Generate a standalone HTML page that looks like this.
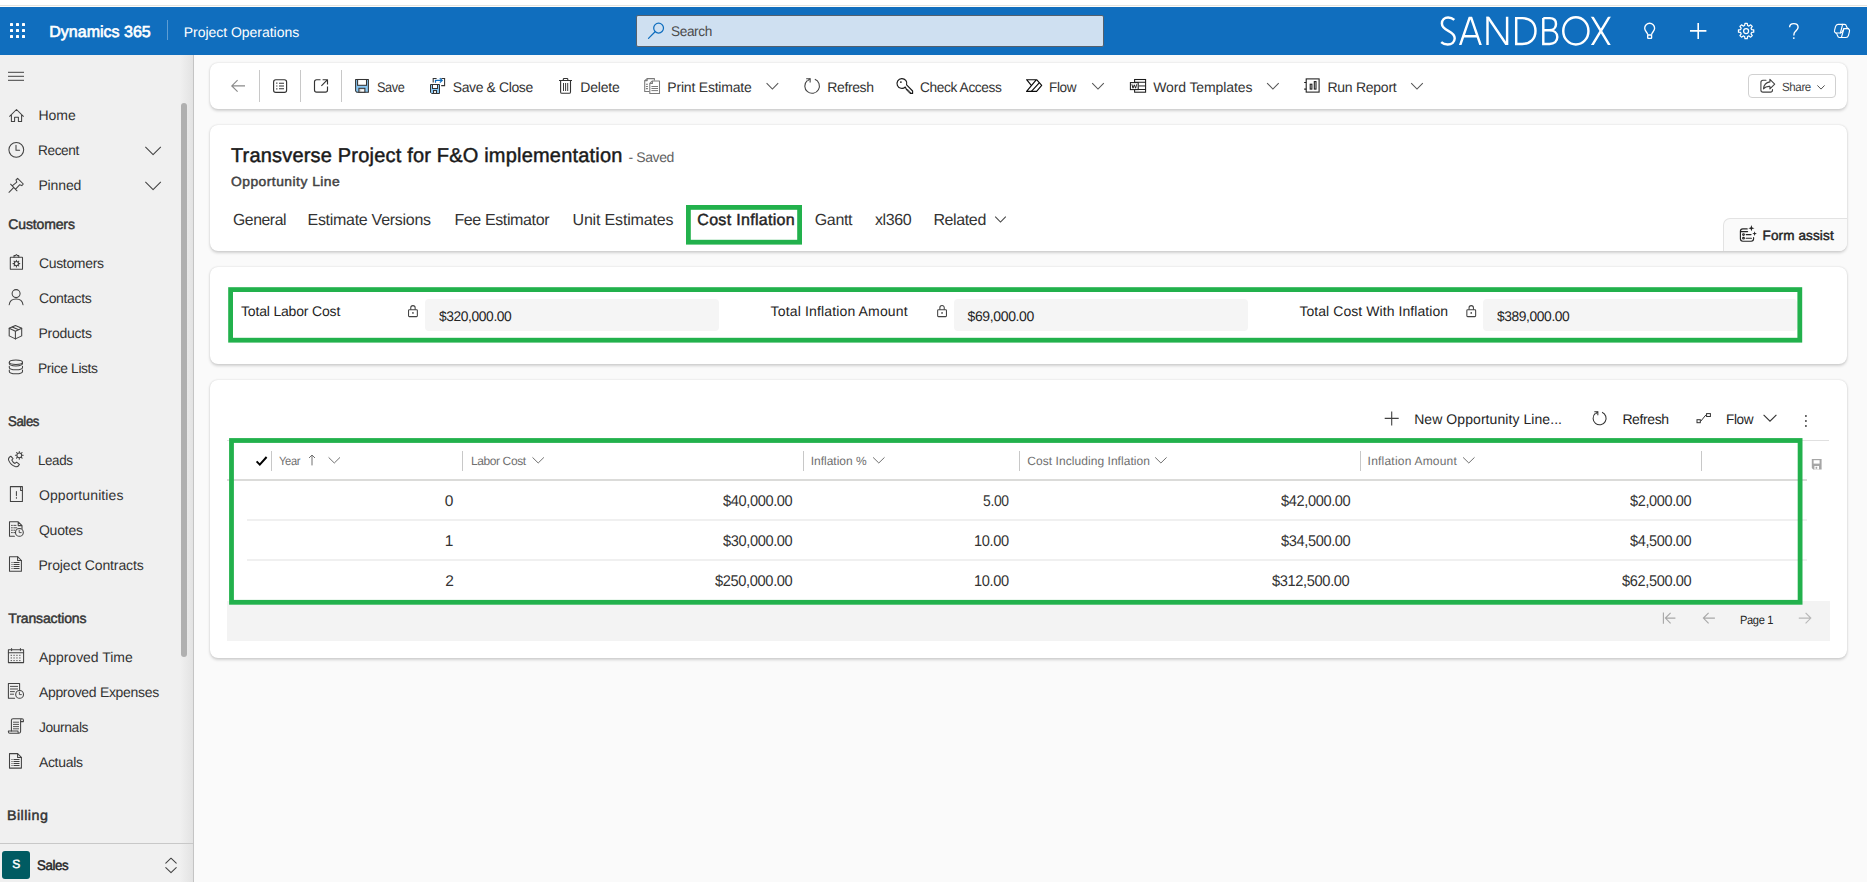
<!DOCTYPE html>
<html lang="en">
<head>
<meta charset="utf-8">
<title>Opportunity Line: Transverse Project for F&amp;O implementation - Dynamics 365</title>
<style>
*{box-sizing:border-box;margin:0;padding:0}
html,body{width:1867px;height:882px;overflow:hidden;background:#fafafa;font-family:"Liberation Sans",sans-serif}
.a{position:absolute}
.t{position:absolute;white-space:pre;display:block;transform-origin:0 0;text-rendering:geometricPrecision}
#topstrip{left:0;top:0;width:1867px;height:7px;border-top:5px solid #fff;border-bottom:1px solid #fffdf9;background:#e3e3df}
#hdr{left:0;top:7px;width:1867px;height:48px;background:#106ebe}
#search{left:636px;top:15px;width:468px;height:32px;background:#cfe0f1;border:1px solid #54606d;border-radius:2px}
#side{left:0;top:55px;width:194px;height:827px;background:#f0f0f0;border-right:1px solid #c4c4c4}
#sideshade{left:180px;top:55px;width:13px;height:827px;background:linear-gradient(90deg,rgba(0,0,0,0),rgba(0,0,0,.055))}
#scroll{left:181px;top:103px;width:6px;height:554px;background:#b0b0b0;border-radius:3px}
#sidefoot{left:0;top:843px;width:193px;height:1px;background:#c8c8c8}
#app{left:2px;top:851px;width:28px;height:28px;background:#005b62;border-radius:3px}
.card{position:absolute;left:210px;width:1637px;background:#fff;border-radius:8px;box-shadow:0 1.2px 3px rgba(0,0,0,.16),0 0 2px rgba(0,0,0,.10)}
#c1{top:63px;height:46px}
#c2{top:125px;height:126px}
#c3{top:267px;height:97px}
#c4{top:380px;height:278px}
.vs{position:absolute;width:1px;background:#c8c8c8}
#share{left:1748px;top:74px;width:88px;height:24px;border:1px solid #d1d1d1;border-radius:4px;background:#fff}
#fa{left:1723px;top:218px;width:124px;height:33px;background:#fafafa;border-top:1px solid #e3e3e3;border-left:1px solid #e3e3e3;border-radius:7px 0 8px 0}
.inp{position:absolute;top:299px;height:32px;background:#f5f5f5;border-radius:4px}
.gb{position:absolute;border:4.8px solid #22b14c}
#gfoot{left:227px;top:601px;width:1603px;height:40px;background:#f3f3f3}
.hl{position:absolute;height:2px;background:#f0f0f0}
</style>
</head>
<body>
<div class="a" id="topstrip"></div>
<div class="a" id="hdr"></div>
<div class="a" id="search"></div>
<div class="a" id="side"></div>
<div class="a" id="sideshade"></div>
<div class="a" id="scroll"></div>
<div class="a" id="sidefoot"></div>
<div class="a" id="app"></div>

<div class="card" id="c1"></div>
<div class="vs" style="left:259px;top:70px;height:32px"></div>
<div class="vs" style="left:300px;top:70px;height:32px"></div>
<div class="vs" style="left:341px;top:70px;height:32px"></div>
<div class="a" id="share"></div>

<div class="card" id="c2"></div>
<div class="a" id="fa"></div>

<div class="card" id="c3"></div>
<div class="inp" style="left:425px;width:294px"></div>
<div class="inp" style="left:954px;width:294px"></div>
<div class="inp" style="left:1483px;width:314px"></div>

<div class="card" id="c4"></div>
<div class="a" style="left:227px;top:440px;width:1602px;height:1px;background:#e0e0e0"></div>
<div class="a" id="gfoot"></div>
<div class="a" style="left:227px;top:479px;width:1580px;height:2px;background:#dbdbd9"></div>
<div class="hl" style="left:247px;top:519px;width:1560px"></div>
<div class="hl" style="left:247px;top:559px;width:1560px"></div>
<div class="vs" style="left:271px;top:451px;height:20px"></div>
<div class="vs" style="left:462px;top:451px;height:20px"></div>
<div class="vs" style="left:803px;top:451px;height:20px"></div>
<div class="vs" style="left:1019px;top:451px;height:20px"></div>
<div class="vs" style="left:1360px;top:451px;height:20px"></div>
<div class="vs" style="left:1701px;top:451px;height:20px"></div>

<span class="t" style="left:49.30px;top:25.00px;font-size:16px;line-height:16px;font-weight:400;color:#ffffff;letter-spacing:0.002px;-webkit-text-stroke:0.64px #ffffff;">Dynamics 365</span>
<span class="t" style="left:183.80px;top:25.00px;font-size:14px;line-height:14px;font-weight:400;color:#ffffff;letter-spacing:-0.032px;">Project Operations</span>
<span class="t" style="left:671.20px;top:24.00px;font-size:14px;line-height:14px;font-weight:400;color:#4a4a4a;letter-spacing:-0.400px;transform:scaleX(0.9742);">Search</span>
<span class="t" style="left:38.40px;top:108.00px;font-size:14px;line-height:14px;font-weight:400;color:#333333;letter-spacing:-0.020px;">Home</span>
<span class="t" style="left:38.43px;top:143.00px;font-size:14px;line-height:14px;font-weight:400;color:#333333;letter-spacing:-0.400px;transform:scaleX(0.9742);">Recent</span>
<span class="t" style="left:38.40px;top:178.00px;font-size:14px;line-height:14px;font-weight:400;color:#333333;letter-spacing:-0.121px;">Pinned</span>
<span class="t" style="left:8.30px;top:217.00px;font-size:14px;line-height:14px;font-weight:400;color:#333333;letter-spacing:-0.135px;-webkit-text-stroke:0.46px #333333;">Customers</span>
<span class="t" style="left:38.90px;top:256.00px;font-size:14px;line-height:14px;font-weight:400;color:#333333;letter-spacing:-0.323px;">Customers</span>
<span class="t" style="left:38.90px;top:291.00px;font-size:14px;line-height:14px;font-weight:400;color:#333333;letter-spacing:-0.350px;">Contacts</span>
<span class="t" style="left:38.40px;top:326.00px;font-size:14px;line-height:14px;font-weight:400;color:#333333;letter-spacing:-0.235px;">Products</span>
<span class="t" style="left:38.41px;top:361.00px;font-size:14px;line-height:14px;font-weight:400;color:#333333;letter-spacing:-0.400px;transform:scaleX(0.9904);">Price Lists</span>
<span class="t" style="left:8.30px;top:414.00px;font-size:14px;line-height:14px;font-weight:400;color:#333333;letter-spacing:-0.400px;transform:scaleX(0.9395);-webkit-text-stroke:0.46px #333333;">Sales</span>
<span class="t" style="left:38.45px;top:453.00px;font-size:14px;line-height:14px;font-weight:400;color:#333333;letter-spacing:-0.400px;transform:scaleX(0.9537);">Leads</span>
<span class="t" style="left:38.90px;top:488.00px;font-size:14px;line-height:14px;font-weight:400;color:#333333;letter-spacing:0.111px;">Opportunities</span>
<span class="t" style="left:38.90px;top:523.00px;font-size:14px;line-height:14px;font-weight:400;color:#333333;letter-spacing:-0.208px;">Quotes</span>
<span class="t" style="left:38.40px;top:558.00px;font-size:14px;line-height:14px;font-weight:400;color:#333333;letter-spacing:-0.130px;">Project Contracts</span>
<span class="t" style="left:8.30px;top:611.00px;font-size:14px;line-height:14px;font-weight:400;color:#333333;letter-spacing:-0.130px;-webkit-text-stroke:0.46px #333333;">Transactions</span>
<span class="t" style="left:38.90px;top:650.00px;font-size:14px;line-height:14px;font-weight:400;color:#333333;letter-spacing:-0.023px;">Approved Time</span>
<span class="t" style="left:38.90px;top:685.00px;font-size:14px;line-height:14px;font-weight:400;color:#333333;letter-spacing:-0.313px;">Approved Expenses</span>
<span class="t" style="left:38.90px;top:720.00px;font-size:14px;line-height:14px;font-weight:400;color:#333333;letter-spacing:-0.400px;transform:scaleX(0.9877);">Journals</span>
<span class="t" style="left:38.90px;top:755.00px;font-size:14px;line-height:14px;font-weight:400;color:#333333;letter-spacing:-0.302px;">Actuals</span>
<span class="t" style="left:7.28px;top:808.00px;font-size:14px;line-height:14px;font-weight:400;color:#333333;letter-spacing:0.450px;transform:scaleX(1.0192);-webkit-text-stroke:0.46px #333333;">Billing</span>
<span class="t" style="left:12.25px;top:858.00px;font-size:12px;line-height:12px;font-weight:400;color:#ffffff;letter-spacing:0.000px;-webkit-text-stroke:0.46px #ffffff;">S</span>
<span class="t" style="left:37.30px;top:858.00px;font-size:14px;line-height:14px;font-weight:400;color:#242424;letter-spacing:-0.400px;transform:scaleX(0.9485);-webkit-text-stroke:0.46px #242424;">Sales</span>
<span class="t" style="left:377.30px;top:80.00px;font-size:14px;line-height:14px;font-weight:400;color:#333333;letter-spacing:-0.400px;transform:scaleX(0.9087);">Save</span>
<span class="t" style="left:452.80px;top:80.00px;font-size:14px;line-height:14px;font-weight:400;color:#333333;letter-spacing:-0.400px;">Save &amp; Close</span>
<span class="t" style="left:580.20px;top:80.00px;font-size:14px;line-height:14px;font-weight:400;color:#333333;letter-spacing:-0.157px;">Delete</span>
<span class="t" style="left:667.30px;top:80.00px;font-size:14px;line-height:14px;font-weight:400;color:#333333;letter-spacing:-0.204px;">Print Estimate</span>
<span class="t" style="left:827.30px;top:80.00px;font-size:14px;line-height:14px;font-weight:400;color:#333333;letter-spacing:-0.400px;">Refresh</span>
<span class="t" style="left:920.40px;top:80.00px;font-size:14px;line-height:14px;font-weight:400;color:#333333;letter-spacing:-0.400px;transform:scaleX(0.9806);">Check Access</span>
<span class="t" style="left:1049.43px;top:80.00px;font-size:14px;line-height:14px;font-weight:400;color:#333333;letter-spacing:-0.400px;transform:scaleX(0.9700);">Flow</span>
<span class="t" style="left:1153.20px;top:80.00px;font-size:14px;line-height:14px;font-weight:400;color:#333333;letter-spacing:-0.111px;">Word Templates</span>
<span class="t" style="left:1327.40px;top:80.00px;font-size:14px;line-height:14px;font-weight:400;color:#333333;letter-spacing:-0.256px;">Run Report</span>
<span class="t" style="left:1781.50px;top:81.00px;font-size:12px;line-height:12px;font-weight:400;color:#424242;letter-spacing:-0.400px;transform:scaleX(0.9627);">Share</span>
<span class="t" style="left:230.90px;top:146.00px;font-size:20px;line-height:20px;font-weight:400;color:#1a1a1a;letter-spacing:0.190px;-webkit-text-stroke:0.46px #1a1a1a;">Transverse Project for F&amp;O implementation</span>
<span class="t" style="left:628.50px;top:150.00px;font-size:14px;line-height:14px;font-weight:400;color:#616161;letter-spacing:-0.400px;">- Saved</span>
<span class="t" style="left:231.00px;top:175.00px;font-size:13.2px;line-height:13.2px;font-weight:400;color:#424242;letter-spacing:0.450px;transform:scaleX(1.0505);-webkit-text-stroke:0.46px #424242;">Opportunity Line</span>
<span class="t" style="left:232.50px;top:213.00px;font-size:16px;line-height:16px;font-weight:400;color:#333333;letter-spacing:-0.400px;transform:scaleX(0.9821);">General</span>
<span class="t" style="left:307.50px;top:213.00px;font-size:16px;line-height:16px;font-weight:400;color:#333333;letter-spacing:-0.285px;">Estimate Versions</span>
<span class="t" style="left:454.40px;top:213.00px;font-size:16px;line-height:16px;font-weight:400;color:#333333;letter-spacing:-0.371px;">Fee Estimator</span>
<span class="t" style="left:572.50px;top:213.00px;font-size:16px;line-height:16px;font-weight:400;color:#333333;letter-spacing:-0.165px;">Unit Estimates</span>
<span class="t" style="left:697.30px;top:213.00px;font-size:16px;line-height:16px;font-weight:400;color:#242424;letter-spacing:0.309px;-webkit-text-stroke:0.46px #242424;">Cost Inflation</span>
<span class="t" style="left:814.80px;top:213.00px;font-size:16px;line-height:16px;font-weight:400;color:#333333;letter-spacing:-0.372px;">Gantt</span>
<span class="t" style="left:874.90px;top:213.00px;font-size:16px;line-height:16px;font-weight:400;color:#333333;letter-spacing:-0.388px;">xl360</span>
<span class="t" style="left:933.40px;top:213.00px;font-size:16px;line-height:16px;font-weight:400;color:#333333;letter-spacing:-0.375px;">Related</span>
<span class="t" style="left:1762.50px;top:229.00px;font-size:13.5px;line-height:13.5px;font-weight:400;color:#242424;letter-spacing:0.140px;-webkit-text-stroke:0.46px #242424;">Form assist</span>
<span class="t" style="left:241.00px;top:304.00px;font-size:14px;line-height:14px;font-weight:400;color:#242424;letter-spacing:-0.177px;">Total Labor Cost</span>
<span class="t" style="left:438.50px;top:309.00px;font-size:14px;line-height:14px;font-weight:400;color:#242424;letter-spacing:-0.400px;transform:scaleX(0.9856);">$320,000.00</span>
<span class="t" style="left:770.60px;top:304.00px;font-size:14px;line-height:14px;font-weight:400;color:#242424;letter-spacing:0.149px;">Total Inflation Amount</span>
<span class="t" style="left:967.50px;top:309.00px;font-size:14px;line-height:14px;font-weight:400;color:#242424;letter-spacing:-0.365px;">$69,000.00</span>
<span class="t" style="left:1299.40px;top:304.00px;font-size:14px;line-height:14px;font-weight:400;color:#242424;letter-spacing:0.068px;">Total Cost With Inflation</span>
<span class="t" style="left:1496.60px;top:309.00px;font-size:14px;line-height:14px;font-weight:400;color:#242424;letter-spacing:-0.400px;transform:scaleX(0.9856);">$389,000.00</span>
<span class="t" style="left:1414.20px;top:412.00px;font-size:14px;line-height:14px;font-weight:400;color:#242424;letter-spacing:0.068px;">New Opportunity Line...</span>
<span class="t" style="left:1622.40px;top:412.00px;font-size:14px;line-height:14px;font-weight:400;color:#242424;letter-spacing:-0.400px;">Refresh</span>
<span class="t" style="left:1726.23px;top:412.00px;font-size:14px;line-height:14px;font-weight:400;color:#242424;letter-spacing:-0.400px;transform:scaleX(0.9700);">Flow</span>
<span class="t" style="left:279.10px;top:455.00px;font-size:12px;line-height:12px;font-weight:400;color:#707070;letter-spacing:-0.400px;transform:scaleX(0.9328);">Year</span>
<span class="t" style="left:470.90px;top:455.00px;font-size:12px;line-height:12px;font-weight:400;color:#707070;letter-spacing:-0.385px;">Labor Cost</span>
<span class="t" style="left:810.70px;top:455.00px;font-size:12px;line-height:12px;font-weight:400;color:#707070;letter-spacing:-0.006px;">Inflation %</span>
<span class="t" style="left:1027.30px;top:455.00px;font-size:12px;line-height:12px;font-weight:400;color:#707070;letter-spacing:0.055px;">Cost Including Inflation</span>
<span class="t" style="left:1367.60px;top:455.00px;font-size:12px;line-height:12px;font-weight:400;color:#707070;letter-spacing:0.212px;">Inflation Amount</span>
<span class="t" style="left:444.75px;top:494.00px;font-size:15.5px;line-height:15.5px;font-weight:400;color:#333333;letter-spacing:0.000px;">0</span>
<span class="t" style="left:723.36px;top:494.00px;font-size:15.5px;line-height:15.5px;font-weight:400;color:#333333;letter-spacing:-0.400px;transform:scaleX(0.9420);">$40,000.00</span>
<span class="t" style="left:983.27px;top:494.00px;font-size:15.5px;line-height:15.5px;font-weight:400;color:#333333;letter-spacing:-0.400px;transform:scaleX(0.8972);">5.00</span>
<span class="t" style="left:1280.56px;top:494.00px;font-size:15.5px;line-height:15.5px;font-weight:400;color:#333333;letter-spacing:-0.400px;transform:scaleX(0.9420);">$42,000.00</span>
<span class="t" style="left:1629.65px;top:494.00px;font-size:15.5px;line-height:15.5px;font-weight:400;color:#333333;letter-spacing:-0.400px;transform:scaleX(0.9367);">$2,000.00</span>
<span class="t" style="left:444.75px;top:534.00px;font-size:15.5px;line-height:15.5px;font-weight:400;color:#333333;letter-spacing:0.000px;">1</span>
<span class="t" style="left:723.36px;top:534.00px;font-size:15.5px;line-height:15.5px;font-weight:400;color:#333333;letter-spacing:-0.400px;transform:scaleX(0.9420);">$30,000.00</span>
<span class="t" style="left:974.24px;top:534.00px;font-size:15.5px;line-height:15.5px;font-weight:400;color:#333333;letter-spacing:-0.400px;transform:scaleX(0.9413);">10.00</span>
<span class="t" style="left:1280.56px;top:534.00px;font-size:15.5px;line-height:15.5px;font-weight:400;color:#333333;letter-spacing:-0.400px;transform:scaleX(0.9420);">$34,500.00</span>
<span class="t" style="left:1629.65px;top:534.00px;font-size:15.5px;line-height:15.5px;font-weight:400;color:#333333;letter-spacing:-0.400px;transform:scaleX(0.9367);">$4,500.00</span>
<span class="t" style="left:445.25px;top:574.00px;font-size:15.5px;line-height:15.5px;font-weight:400;color:#333333;letter-spacing:0.000px;">2</span>
<span class="t" style="left:715.27px;top:574.00px;font-size:15.5px;line-height:15.5px;font-weight:400;color:#333333;letter-spacing:-0.400px;transform:scaleX(0.9462);">$250,000.00</span>
<span class="t" style="left:974.24px;top:574.00px;font-size:15.5px;line-height:15.5px;font-weight:400;color:#333333;letter-spacing:-0.400px;transform:scaleX(0.9413);">10.00</span>
<span class="t" style="left:1272.47px;top:574.00px;font-size:15.5px;line-height:15.5px;font-weight:400;color:#333333;letter-spacing:-0.400px;transform:scaleX(0.9462);">$312,500.00</span>
<span class="t" style="left:1621.56px;top:574.00px;font-size:15.5px;line-height:15.5px;font-weight:400;color:#333333;letter-spacing:-0.400px;transform:scaleX(0.9420);">$62,500.00</span>
<span class="t" style="left:1740.10px;top:614.00px;font-size:12px;line-height:12px;font-weight:400;color:#242424;letter-spacing:-0.400px;transform:scaleX(0.9269);">Page 1</span>

<svg class="a" style="left:0;top:0" width="1867" height="882" viewBox="0 0 1867 882" fill="none">
<rect x="10" y="23" width="3" height="3" rx="0.6" fill="#fff"/>
<rect x="10" y="29" width="3" height="3" rx="0.6" fill="#fff"/>
<rect x="10" y="35" width="3" height="3" rx="0.6" fill="#fff"/>
<rect x="16" y="23" width="3" height="3" rx="0.6" fill="#fff"/>
<rect x="16" y="29" width="3" height="3" rx="0.6" fill="#fff"/>
<rect x="16" y="35" width="3" height="3" rx="0.6" fill="#fff"/>
<rect x="22" y="23" width="3" height="3" rx="0.6" fill="#fff"/>
<rect x="22" y="29" width="3" height="3" rx="0.6" fill="#fff"/>
<rect x="22" y="35" width="3" height="3" rx="0.6" fill="#fff"/>
<rect x="167" y="20" width="1" height="20" fill="#fff" fill-opacity=".33"/>
<g stroke="#106ebe" stroke-width="1.25" stroke-linecap="round"><circle cx="658.6" cy="28.1" r="4.9"/><path d="M655.1 31.7L648.5 38.4"/></g>
<defs><clipPath id="capclip"><rect x="1430" y="16.8" width="200" height="28.3"/></clipPath><clipPath id="nclip"><rect x="1486.27" y="16.8" width="22.06" height="28.3"/></clipPath></defs><g stroke="#fff" stroke-width="2.45" fill="none" stroke-linejoin="miter">
<path d="M1454.3 19.9C1452.6 18.3 1450.6 17.4 1448.1 17.4C1444.5 17.4 1441.9 19.9 1441.9 23.5C1441.9 27.4 1444.9 29.1 1448.3 30.8C1452 32.7 1454.7 34.6 1454.7 38.3C1454.7 42 1451.8 44.5 1447.7 44.5C1445.1 44.5 1442.6 43.5 1441.2 42.2"/>
<g clip-path="url(#capclip)"><path d="M1459.51 47.1L1470.64 14.8M1481.29 47.1L1470.16 14.8M1463.8 36.3H1477"/>
<path d="M1487.5 14V48M1507.1 14V48"/></g><g clip-path="url(#nclip)"><path d="M1486.6 15.1L1508 46.8"/></g>
<path d="M1516.2 18.1H1522.5C1530.5 18.1 1535.5 23 1535.5 30.8C1535.5 38.8 1530.3 43.9 1522.3 43.9H1516.2Z"/>
<path d="M1543.3 18.1H1549.8C1553.6 18.1 1556 20.3 1556 23.9C1556 27.6 1553.4 30.3 1549.4 30.3H1543.3M1549.4 30.3C1554 30.3 1557.3 32.8 1557.3 37C1557.3 41.3 1554.2 43.9 1549.6 43.9H1543.3V18.1"/>
<ellipse cx="1575.85" cy="30.9" rx="12.6" ry="13.6"/>
<g clip-path="url(#capclip)"><path d="M1591.1 14.8L1610.6 47.1M1610.6 14.8L1591.1 47.1"/></g>
</g>
<g stroke="#fff" stroke-width="1.35" fill="none" stroke-linejoin="round"><path d="M1647.7 34.8C1647.7 32.4 1644.7 31.4 1644.7 28.2A4.95 4.95 0 0 1 1654.6 28.2C1654.6 31.4 1651.6 32.4 1651.6 34.8"/><rect x="1647.7" y="35" width="3.9" height="3.3" rx="0.5"/></g>
<path d="M1690 30.9H1706.4M1698.2 22.9V38.9" stroke="#fff" stroke-width="1.6"/>
<g stroke="#fff" stroke-width="1.25" fill="none" stroke-linejoin="round"><path d="M1753.72 29.87L1753.72 32.13L1751.60 32.49L1751.05 33.83L1752.28 35.59L1750.69 37.18L1748.93 35.95L1747.59 36.50L1747.23 38.62L1744.97 38.62L1744.61 36.50L1743.27 35.95L1741.51 37.18L1739.92 35.59L1741.15 33.83L1740.60 32.49L1738.48 32.13L1738.48 29.87L1740.60 29.51L1741.15 28.17L1739.92 26.41L1741.51 24.82L1743.27 26.05L1744.61 25.50L1744.97 23.38L1747.23 23.38L1747.59 25.50L1748.93 26.05L1750.69 24.82L1752.28 26.41L1751.05 28.17L1751.60 29.51Z"/><circle cx="1746.1" cy="31" r="2.5"/></g>
<g stroke="#fff" stroke-width="1.4" fill="none" stroke-linecap="butt"><path d="M1789.6 27.2C1789.6 24.8 1791.5 23.6 1793.8 23.6C1796.2 23.6 1798.1 25 1798.1 27.3C1798.1 29.3 1796.7 30.3 1795.5 31.3C1794.3 32.3 1793.8 33.2 1793.8 35.4"/></g><circle cx="1793.8" cy="38.1" r="0.95" fill="#fff"/>
<g stroke="#fff" stroke-width="1.15" fill="none" stroke-linejoin="round" stroke-linecap="round">
<path d="M1842.6 24.4H1838C1836.6 24.4 1835.9 25.3 1835.5 26.6L1834.6 30.2C1834.1 32 1835 33 1836.4 33H1840.4L1842.6 24.4Z"/>
<path d="M1842.6 24.4H1844.6C1845.8 24.4 1846.2 25.2 1846.5 26.3C1846.8 27.6 1847.3 28.4 1848.4 28.6"/>
<path d="M1841.4 37.5H1846C1847.4 37.5 1848.1 36.6 1848.5 35.3L1849.4 31.7C1849.9 29.9 1849 28.6 1847.6 28.6H1843.9L1841.4 37.5Z"/>
<path d="M1841.4 37.5H1839.4C1838.2 37.5 1837.8 36.7 1837.5 35.6C1837.2 34.3 1836.9 33.3 1835.8 33"/>
<path d="M1840.4 33C1841.6 33 1842.3 32.3 1842.7 31L1843.9 28.6"/>
</g>
<path d="M8 72.3H24M8 76.3H24M8 80.3H24" stroke="#424242" stroke-width="1"/>
<g stroke="#424242" stroke-width="1.05" fill="none" stroke-linejoin="round" stroke-linecap="round">
<path d="M9.6 116.3L16.5 109.5L23.4 116.3M11.4 114.8V121.4H14.6V117.2H18.4V121.4H21.6V114.8"/>
<circle cx="16.3" cy="149.8" r="7.4"/><path d="M16 145.3V150.3H19.6"/>
<path d="M145.6 147.2L153.1 154.6L160.6 147.2"/><path d="M145.6 182.2L153.1 189.6L160.6 182.2"/>
<path d="M9 192.3L13.6 187.7M10.6 184.2L17 190.8M12.2 185.8L16.8 182.2L16 179.8L17.6 178.3L23.3 184L21.8 185.6L19.6 184.8L15.6 189.2"/>
<rect x="10.3" y="257.3" width="12.2" height="12" rx="0.4"/><path d="M14 257.3V255.6H15.3L16.4 254.5L17.5 255.6H18.8V257.3"/><circle cx="16.4" cy="263.6" r="2.1"/><path d="M16.4 260.2V261.2M16.4 266V267M13 263.6H14M18.8 263.6H19.8M14 261.2L14.7 261.9M18.1 265.3L18.8 266M18.8 261.2L18.1 261.9M14 266L14.7 265.3"/>
<circle cx="16.1" cy="293.6" r="4"/><path d="M9.2 304.8C9.7 300.8 12.4 298.9 16.1 298.9C19.8 298.9 22.5 300.8 23 304.8"/>
<path d="M15.4 325.5L21.7 328.3V335.9L15.4 338.9L9.2 335.9V328.3Z"/><path d="M9.2 328.3L15.4 331.2L21.7 328.3M15.4 331.2V338.9M12.3 326.9L18.6 329.8"/>
<ellipse cx="15.9" cy="362.3" rx="6.6" ry="2.2"/><path d="M9.3 362.3V363.6C9.3 364.9 12.2 365.9 15.9 365.9C19.6 365.9 22.5 364.9 22.5 363.6V362.3"/><path d="M9.3 366.2V367.5C9.3 368.8 12.2 369.8 15.9 369.8C19.6 369.8 22.5 368.8 22.5 367.5V366.2"/><path d="M9.3 370.1V371.4C9.3 372.7 12.2 373.7 15.9 373.7C19.6 373.7 22.5 372.7 22.5 371.4V370.1"/>
<path d="M10.8 456.2C9 457.2 7.9 458.6 8.8 460.6C10.2 463.6 12.4 465.6 15.2 466.6C17.2 467.2 18.6 466 19.4 464.4L16.6 462.2L15 463.4C13.6 462.8 12.4 461.4 11.8 460L13 458.6Z"/><circle cx="19.3" cy="455.3" r="2.4"/><path d="M19.3 451.4V452.4M19.3 458.2V459.2M15.4 455.3H16.4M22.2 455.3H23.2M16.5 452.5L17.2 453.2M21.4 457.4L22.1 458.1M22.1 452.5L21.4 453.2M16.5 458.1L17.2 457.4"/>
<path d="M20.6 486.6H10.4V501.4H22.4V490.4"/><path d="M20.6 486.6H22.4V490.4H20.6Z"/><path d="M16.4 491.4V495.6M16.4 497.4V498.2"/>
<path d="M14.4 536.2H9.5V521.8H18.2L22 525.6V528.4M18.2 521.8V525.6H22"/><path d="M11.4 525.4H12.4M13.8 525.4H16M11.4 527.8H12.4M13.8 527.8H16.8M11.4 530.2H12.4M13.8 530.2H15M11.4 532.6H12.4M13.8 532.6H14.6" stroke-width=".9"/><circle cx="19.4" cy="532.4" r="3.9"/><path d="M19.2 530.2V532.6H21.2" stroke-width=".9"/>
<path d="M9.5 556.7H17.6L21.4 560.5V571.2H9.5Z"/><path d="M17.6 556.7V560.5H21.4"/><path d="M11.5 562.5H12.5M13.5 562.5H19.5M11.5 564.5H12.5M13.5 564.5H19.5M11.5 566.5H12.5M13.5 566.5H19.5M11.5 568.5H12.5M13.5 568.5H19.5" stroke-width="1" stroke-linecap="butt"/>
<rect x="8.4" y="649.8" width="15.2" height="12.8"/><path d="M8.4 652.8H23.6M11.6 648.4V650.6M20.4 648.4V650.6"/><rect x="10.7" y="654.8" width="1.1" height="1.1" fill="#424242" stroke="none"/><rect x="13.5" y="654.8" width="1.1" height="1.1" fill="#424242" stroke="none"/><rect x="16.4" y="654.8" width="1.1" height="1.1" fill="#424242" stroke="none"/><rect x="19.3" y="654.8" width="1.1" height="1.1" fill="#424242" stroke="none"/><rect x="10.7" y="657.4" width="1.1" height="1.1" fill="#424242" stroke="none"/><rect x="13.5" y="657.4" width="1.1" height="1.1" fill="#424242" stroke="none"/><rect x="16.4" y="657.4" width="1.1" height="1.1" fill="#424242" stroke="none"/><rect x="19.3" y="657.4" width="1.1" height="1.1" fill="#424242" stroke="none"/><rect x="10.7" y="660" width="1.1" height="1.1" fill="#424242" stroke="none"/><rect x="13.5" y="660" width="1.1" height="1.1" fill="#424242" stroke="none"/><rect x="16.4" y="660" width="1.1" height="1.1" fill="#424242" stroke="none"/><rect x="19.3" y="660" width="1.1" height="1.1" fill="#424242" stroke="none"/>
<path d="M14.6 698.2H8.4V683.4H19.6V690.4"/><path d="M10.4 686.4H17.6M10.4 689H17.6M10.4 691.6H14.4M10.4 694.2H13.6" stroke-width=".95"/><circle cx="19.6" cy="694.4" r="3.9"/><path d="M19.4 692.2V694.6H21.4" stroke-width=".9"/>
<path d="M11.4 731V720.2C11.4 719.2 12 718.8 13 718.8H22C23 718.8 23.4 719.4 23.4 720.2V721.6H20.6V720.4C20.6 719.4 21 718.8 22 718.8"/><path d="M20.6 721.6V731.6C20.6 732.6 20 733.2 19 733.2H9.8C8.8 733.2 8.4 732.6 8.4 731.8V731H18V731.8C18 732.6 18.4 733.2 19 733.2"/><path d="M13.4 722.2H18.6M13.4 724.4H18.6M13.4 726.6H18.6M13.4 728.8H18.6" stroke-width=".9"/>
<path d="M9.5 753.6H17.6L21.4 757.4V768.1H9.5Z"/><path d="M17.6 753.6V757.4H21.4"/><path d="M11.5 759.5H12.5M13.5 759.5H19.5M11.5 761.5H12.5M13.5 761.5H19.5M11.5 763.5H12.5M13.5 763.5H19.5M11.5 765.5H12.5M13.5 765.5H19.5" stroke-width="1" stroke-linecap="butt"/>
<path d="M165.8 863.2L171 858.2L176.2 863.2M165.8 867.6L171 872.6L176.2 867.6"/>
</g><path d="M245 85.9H232M237.6 80.2L231.8 85.9L237.6 91.7" stroke="#8a8a8a" stroke-width="1.15" fill="none"/>
<g stroke="#333333" stroke-width="1.15" fill="none"><rect x="273.6" y="79.7" width="13" height="12.7" rx="2.2"/><path d="M279 83.2H284M279 86H284M279 88.8H284" stroke-width="1.05"/><path d="M276.2 83.2H277.4M276.2 86H277.4M276.2 88.8H277.4" stroke-width="1.2"/></g>
<g stroke="#333333" stroke-width="1.15" fill="none" stroke-linejoin="round"><path d="M320.5 79.7H316.6C315.3 79.7 314.5 80.5 314.5 81.8V90C314.5 91.3 315.3 92.1 316.6 92.1H325.4C326.7 92.1 327.5 91.3 327.5 90V86.6"/><path d="M322.6 79.7H327.5V84.6M327.5 79.7L321.4 85.8"/></g>
<path d="M355.60 79.50H368.40V92.30H356.90L355.60 91.00Z" fill="#8ac7f3" stroke="#333333" stroke-width="1.05" stroke-linejoin="round"/><rect x="357.60" y="79.50" width="8.90" height="5.80" fill="#fff" stroke="#333333" stroke-width="1.05"/><rect x="358.90" y="88.30" width="6.00" height="4.00" fill="#d8d8d8" stroke="#333333" stroke-width="1.05"/><rect x="361.30" y="89.60" width="2.60" height="1.60" fill="#fff"/>
<g stroke="#333" stroke-width="1"><path d="M430.5 84.5H439.5V93.5H431.7L430.5 92.3Z" fill="#8ac7f3" stroke-linejoin="round"/><rect x="432.5" y="84.5" width="5" height="4" fill="#fff"/><rect x="433.5" y="90.5" width="3" height="3" fill="#e6e6e6"/></g>
<g stroke="#333333" stroke-width="1.05" fill="none"><path d="M436.6 78.4H433.2V82.6"/><path d="M441.4 78.4H444.6V85.6H441.2"/></g>
<g stroke="#106ebe" stroke-width="1.2" fill="none"><path d="M435.5 82.8V80.4H442"/><path d="M439.8 78.2L442.2 80.4L439.8 82.6"/></g>
<g stroke="#333333" stroke-width="1.1" fill="none" stroke-linejoin="round"><path d="M559 80.5H572M563.3 80.3V79.3C563.3 78.8 563.6 78.5 564.1 78.5H567C567.5 78.5 567.8 78.8 567.8 79.3V80.3"/><path d="M560.6 80.6V91.9C560.6 92.8 561.2 93.3 562 93.3H569.1C569.9 93.3 570.5 92.8 570.5 91.9V80.6"/><path d="M563.5 83V91M565.6 83V91M567.7 83V91" stroke-width="0.95"/></g>
<g stroke="#7a7a7a" stroke-width="1.05" fill="none" stroke-linejoin="round"><path d="M649.4 91.5H644.7V80.6L647.2 78.6H654.4V80.6"/><path d="M644.7 80.6H647.2V78.6"/><path d="M645.9 84.3H647.9M645.9 86.5H647.9M645.9 88.6H647.9" stroke-width="1.1"/><path d="M652.4 80.9H659.5V93.4H649.8V83.4Z" fill="#fff"/><path d="M649.8 83.4H652.4V80.9"/><path d="M651.4 86.5H658M651.4 88.5H658M651.4 90.6H658" stroke-width="1"/></g>
<path d="M766.60 83.20L772.40 89.00L778.20 83.20" stroke="#555555" stroke-width="1.05" fill="none"/>
<path d="M1092.20 83.20L1098.00 89.00L1103.80 83.20" stroke="#555555" stroke-width="1.05" fill="none"/>
<path d="M1267.10 83.20L1272.90 89.00L1278.70 83.20" stroke="#555555" stroke-width="1.05" fill="none"/>
<path d="M1411.20 83.20L1417.00 89.00L1422.80 83.20" stroke="#555555" stroke-width="1.05" fill="none"/>
<g stroke="#444" stroke-width="1.1" fill="none"><path d="M814.83 79.23A7.3 7.3 0 1 1 807.22 80.58"/><path d="M806.18 78.70H810.13V82.45"/><path d="M810.13 78.70L807.52 80.88" /></g>
<g stroke="#1a1a1a" stroke-width="1.15" fill="none" stroke-linejoin="round"><path d="M905.3 87.0A4.9 4.9 0 1 1 906.6 84.9L912.6 91V93.4H910.2V92.2H909V91H907.8V89.8H906.6L905.3 87Z"/></g><circle cx="900.9" cy="82.1" r="0.9" fill="#1a1a1a"/>
<g stroke="#0a0a0a" stroke-width="1.15" fill="none" stroke-linejoin="round" stroke-linecap="round"><path d="M1030.9 84.9L1026.6 79.7H1036.6L1041.7 85.4L1036.6 91.4H1026.6L1036.2 79.9"/><path d="M1039 83.2L1031.4 91.3"/></g>
<g stroke="#1a1a1a" stroke-width="1.05" fill="none"><rect x="1134.6" y="79.5" width="11" height="12.7"/><path d="M1134.6 82.2H1145.6M1134.6 89.5H1145.6"/><path d="M1138.6 85.9H1145" stroke="#777" stroke-width="1.6"/><rect x="1130.4" y="82.6" width="7.8" height="7" fill="#fff"/><path d="M1131.9 84.3L1133 88.2L1134.3 84.8L1135.6 88.2L1136.7 84.3" stroke-width="0.95"/></g>
<g stroke="#1a1a1a" stroke-width="1.05" fill="none"><rect x="1306.2" y="78.9" width="12.9" height="13.2"/><rect x="1310.2" y="84.2" width="1.7" height="4.9"/><rect x="1314.3" y="81.6" width="1.7" height="7.5"/><path d="M1304.2 82.5H1306.2M1304.2 89.1H1306.2" stroke-width="1.2"/></g>
<g stroke="#424242" stroke-width="1.1" fill="none" stroke-linejoin="round" stroke-linecap="round"><path d="M1766 80.3H1763C1761.6 80.3 1760.9 81.1 1760.9 82.4V90C1760.9 91.4 1761.6 92.1 1763 92.1H1770.4C1771.8 92.1 1772.5 91.4 1772.5 90V89.6"/><path d="M1769.9 79.4L1774.7 84.1L1769.9 88.8V86.4C1767 86.2 1765 87 1763.5 88.8C1763.9 85 1766 82.4 1769.9 81.9Z"/></g>
<path d="M1817.40 85.40L1821.00 89.10L1824.60 85.40" stroke="#555" stroke-width="1.0" fill="none"/>
<path d="M995.20 216.60L1000.50 222.10L1005.80 216.60" stroke="#444" stroke-width="1.05" fill="none"/>
<g stroke="#242424" stroke-width="1.15" fill="none" stroke-linecap="round" stroke-linejoin="round">
<path d="M1747.2 228.9H1742.8C1741.4 228.9 1740.4 229.9 1740.4 231.3V238.8C1740.4 240.2 1741.4 241.2 1742.8 241.2H1751.2C1752.6 241.2 1753.6 240.2 1753.6 238.8V237.6"/>
<path d="M1740.6 231.6H1747.6"/>
<circle cx="1743.5" cy="234.6" r="0.85"/><path d="M1746.2 234.6H1751"/>
<circle cx="1743.5" cy="238.2" r="0.85"/><path d="M1746.2 238.2H1751.4"/>
</g>
<path d="M1751.4 225.1L1752.2 227.4L1754.5 228.2L1752.2 229L1751.4 231.3L1750.6 229L1748.3 228.2L1750.6 227.4Z" fill="#242424"/>
<path d="M1754.6 231.3L1755.2 233L1756.9 233.6L1755.2 234.2L1754.6 235.9L1754 234.2L1752.3 233.6L1754 233Z" fill="#242424"/>
<g stroke="#424242" stroke-width="1.05" fill="none"><rect x="408.55" y="309.7" width="8.8" height="6.9" rx="0.8"/><path d="M410.75 309.7V307.8A2.2 2.2 0 0 1 415.15 307.8V309.7"/></g><circle cx="412.95" cy="312.9" r="0.85" fill="#424242"/>
<g stroke="#424242" stroke-width="1.05" fill="none"><rect x="937.65" y="309.7" width="8.8" height="6.9" rx="0.8"/><path d="M939.85 309.7V307.8A2.2 2.2 0 0 1 944.25 307.8V309.7"/></g><circle cx="942.05" cy="312.9" r="0.85" fill="#424242"/>
<g stroke="#424242" stroke-width="1.05" fill="none"><rect x="1466.85" y="309.7" width="8.8" height="6.9" rx="0.8"/><path d="M1469.05 309.7V307.8A2.2 2.2 0 0 1 1473.45 307.8V309.7"/></g><circle cx="1471.25" cy="312.9" r="0.85" fill="#424242"/>
<path d="M1384.7 418.4H1398.7M1391.7 411.4V425.4" stroke="#424242" stroke-width="1.1"/>
<g stroke="#333" stroke-width="1.05" fill="none"><path d="M1602.03 412.27A6.5 6.5 0 1 1 1595.25 413.47"/><path d="M1594.33 411.80H1597.84V415.14"/><path d="M1597.84 411.80L1595.55 413.77" /></g>
<g stroke="#333" stroke-width="1" fill="none"><rect x="1697" y="419.7" width="3.3" height="3"/><path d="M1700.6 421.4L1706 414.8"/><rect x="1706.6" y="413.6" width="3.8" height="2.9"/></g>
<path d="M1763.60 414.80L1770.00 421.20L1776.40 414.80" stroke="#333" stroke-width="1.1" fill="none"/>
<g fill="#424242"><circle cx="1805.9" cy="416" r="0.95"/><circle cx="1805.9" cy="421" r="0.95"/><circle cx="1805.9" cy="426" r="0.95"/></g>
<path d="M256.6 461.4L259.8 464.6L266.6 457" stroke="#000" stroke-width="2" fill="none"/>
<path d="M312 465.4V455M309 458L312 455L315 458" stroke="#707070" stroke-width="1" fill="none"/>
<path d="M328.60 457.40L334.30 463.00L340.00 457.40" stroke="#707070" stroke-width="1.0" fill="none"/>
<path d="M532.50 457.40L538.20 463.00L543.90 457.40" stroke="#707070" stroke-width="1.0" fill="none"/>
<path d="M873.10 457.40L878.80 463.00L884.50 457.40" stroke="#707070" stroke-width="1.0" fill="none"/>
<path d="M1155.20 457.40L1160.90 463.00L1166.60 457.40" stroke="#707070" stroke-width="1.0" fill="none"/>
<path d="M1463.10 457.40L1468.80 463.00L1474.50 457.40" stroke="#707070" stroke-width="1.0" fill="none"/>
<g fill="#a6a6a6"><path d="M1811.8 459H1821.6V469.4H1813.2L1811.8 468Z"/></g><rect x="1813.6" y="460.2" width="6" height="3.4" fill="#fff"/><rect x="1814.4" y="466" width="4.6" height="3.4" fill="#fff"/><rect x="1815.6" y="466.8" width="1.6" height="2" fill="#a6a6a6"/>
<g stroke="#a8a8a8" stroke-width="1.15" fill="none"><path d="M1663.4 612.4V623.8"/><path d="M1675.4 618.1H1665.6M1670.6 612.8L1665.4 618.1L1670.6 623.4"/><path d="M1714.9 618.1H1703.6M1708.6 612.8L1703.4 618.1L1708.6 623.4"/></g>
<path d="M1798.8 618.1H1810.6M1805.6 612.8L1810.8 618.1L1805.6 623.4" stroke="#b8b8b8" stroke-width="1.15" fill="none"/>
<!-- green annotation boxes -->
<g stroke="#22b14c" stroke-width="4.8" fill="none">
<rect x="688.4" y="207.4" width="111.2" height="34.8"/>
<rect x="230.6" y="289.6" width="1569.2" height="50.6"/>
<rect x="231.5" y="440.5" width="1568.6" height="161.8"/>
</g>
</svg>
</body>
</html>
